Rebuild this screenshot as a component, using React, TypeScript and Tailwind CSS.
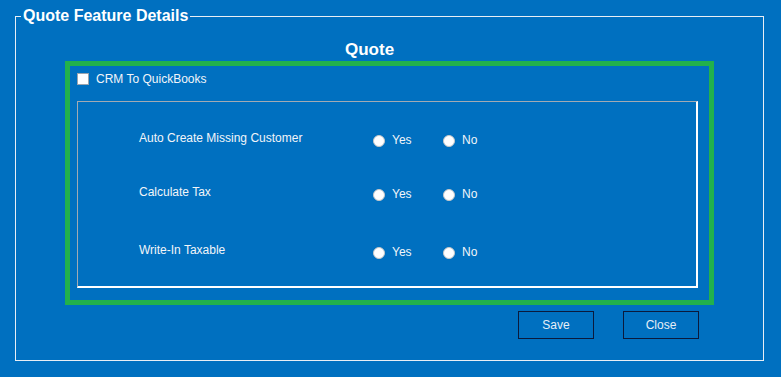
import React from "react";

const rows = [
  { label: "Auto Create Missing Customer", mt: "mt-[26px]" },
  { label: "Calculate Tax", mt: "mt-[34px]" },
  { label: "Write-In Taxable", mt: "mt-[38px]" },
];

function Radio({ label }: { label: string }) {
  return (
    <div className="flex items-start">
      <span className="mt-[5px] w-[12px] h-[12px] rounded-full bg-white border border-[#c8c8c8] shrink-0" />
      <span className="ml-[7px] text-[12px] leading-[20px] text-[#f2f5f9]">{label}</span>
    </div>
  );
}

export default function App() {
  return (
    <div className="w-[781px] h-[377px] bg-[#0070c0] pt-[16px] pl-[15px] font-['Liberation_Sans',Arial,sans-serif] overflow-hidden">
      <div className="relative w-[749px] h-[345px] border border-[#e8eef5] flex flex-col">
        <span className="absolute top-[-10px] left-[5px] px-[2px] bg-[#0070c0] text-white font-bold text-[16px] leading-[18px]">
          Quote Feature Details
        </span>
        <div className="mt-[23px] ml-[329px] text-white font-bold text-[17px] leading-[20px]">Quote</div>
        <div className="mt-[1px] ml-[49px] w-[649px] h-[244px] border-[5px] border-[#22b14c] flex flex-col">
          <div className="mt-[6px] ml-[7px] flex items-center h-[14px]">
            <span className="w-[12px] h-[12px] bg-white border border-[#9aa4ae]" />
            <span className="ml-[7px] text-[12px] leading-[14px] text-[#f2f5f9]">CRM To QuickBooks</span>
          </div>
          <div className="mt-[15px] ml-[7px] w-[621px] h-[187px] border-t border-l border-t-[#a3aab3] border-l-[#a3aab3] border-r-2 border-b-2 border-r-white border-b-white flex flex-col pl-[61px]">
            {rows.map((r) => (
              <div key={r.label} className={`${r.mt} flex items-start h-[20px]`}>
                <span className="w-[234px] text-[12px] leading-[20px] text-[#f2f5f9]">{r.label}</span>
                <div className="mt-[2px] flex">
                  <div className="w-[70px]">
                    <Radio label="Yes" />
                  </div>
                  <Radio label="No" />
                </div>
              </div>
            ))}
          </div>
        </div>
        <div className="mt-[6px] ml-[502px] flex gap-[29px]">
          <button className="w-[76px] h-[28px] border border-[#0b1a3c] text-[12px] text-[#e6eef7] flex items-center justify-center">
            Save
          </button>
          <button className="w-[76px] h-[28px] border border-[#0b1a3c] text-[12px] text-[#e6eef7] flex items-center justify-center">
            Close
          </button>
        </div>
      </div>
    </div>
  );
}
